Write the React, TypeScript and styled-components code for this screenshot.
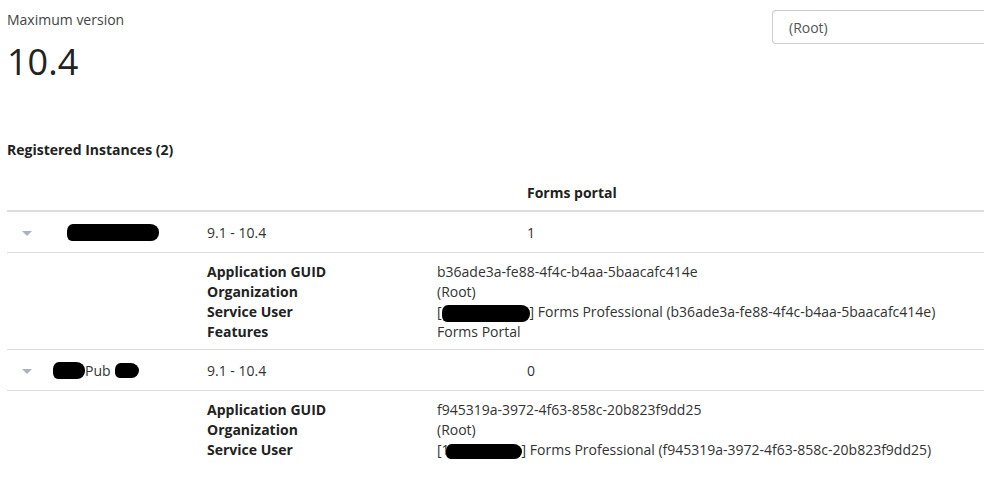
import React from "react";
import styled, { createGlobalStyle } from "styled-components";

const Global = createGlobalStyle`
  html, body { margin: 0; padding: 0; background: #fff; }
  body { font-family: "Open Sans", "Liberation Sans", sans-serif; font-size: 14px; color: #333; }
`;

const Page = styled.div`
  padding: 0 0 0 7px;
  width: 984px;
  box-sizing: border-box;
  overflow: hidden;
`;

const TopBar = styled.div`
  display: flex;
  justify-content: space-between;
  align-items: flex-start;
`;

const VersionBlock = styled.div`
  padding-top: 10px;
`;

const SmallLabel = styled.div`
  font-size: 14px;
  line-height: 20px;
  color: #444;
`;

const BigNumber = styled.div`
  font-size: 36px;
  line-height: 48px;
  margin-top: 8px;
  color: #222;
`;

const SelectBox = styled.div`
  margin-top: 10px;
  width: 212px;
  height: 34px;
  box-sizing: border-box;
  border: 1px solid #ccc;
  border-right: none;
  border-radius: 4px 0 0 4px;
  padding: 0 16px;
  display: flex;
  align-items: center;
  color: #555;
  font-size: 14px;
`;

const SectionTitle = styled.div`
  margin-top: 54px;
  font-weight: 700;
  font-size: 14px;
  line-height: 20px;
  color: #222;
`;

const Table = styled.div`
  margin-top: 14px;
  display: grid;
  grid-template-columns: 52px 140px 320px 1fr;
`;

const HeaderCell = styled.div<{ $col: number }>`
  grid-column: ${(p) => p.$col};
  height: 38px;
  box-sizing: border-box;
  border-bottom: 2px solid #ddd;
  padding: 0 8px;
  display: flex;
  align-items: center;
  font-weight: 700;
  color: #222;
`;

const Cell = styled.div`
  height: 41px;
  box-sizing: border-box;
  border-bottom: 1px solid #ddd;
  padding: 0 8px;
  display: flex;
  align-items: center;
  white-space: nowrap;
`;

const CaretCell = styled(Cell)`
  padding-left: 15px;
`;

const Caret = styled.span`
  width: 0;
  height: 0;
  border-left: 5px solid transparent;
  border-right: 5px solid transparent;
  border-top: 5px solid #aab1c0;
  margin-top: 3px;
`;

const DetailsRow = styled.div<{ $last?: boolean }>`
  grid-column: 1 / -1;
  border-bottom: ${(p) => (p.$last ? "none" : "1px solid #ddd")};
  display: grid;
  grid-template-columns: 192px 230px 1fr;
  padding: 9px 0 7px;
`;

const DetailsGrid = styled.div`
  grid-column: 2 / 4;
  display: grid;
  grid-template-columns: 230px 1fr;
  padding-left: 8px;
  line-height: 20px;
`;

const DetailLabel = styled.div`
  font-weight: 700;
  color: #222;
`;

const DetailValue = styled.div`
  white-space: nowrap;
`;

const Redact = styled.span<{ $w: number; $h: number }>`
  display: inline-block;
  vertical-align: middle;
  width: ${(p) => p.$w}px;
  height: ${(p) => p.$h}px;
  background: #000;
  border-radius: 6px 9px 8px 5px / 7px 8px 8px 6px;
`;

type Instance = {
  name: React.ReactNode;
  version: string;
  count: string;
  guid: string;
  user: React.ReactNode;
  features?: string;
};

const instances: Instance[] = [
  {
    name: <Redact $w={92} $h={17} />,
    version: "9.1 - 10.4",
    count: "1",
    guid: "b36ade3a-fe88-4f4c-b4aa-5baacafc414e",
    user: (
      <>
        [<Redact $w={88} $h={17} />] Forms Professional (b36ade3a-fe88-4f4c-b4aa-5baacafc414e)
      </>
    ),
    features: "Forms Portal",
  },
  {
    name: (
      <>
        <Redact $w={32} $h={17} style={{ marginLeft: -14 }} />
        Pub
        <Redact $w={24} $h={15} style={{ marginLeft: 4 }} />
      </>
    ),
    version: "9.1 - 10.4",
    count: "0",
    guid: "f945319a-3972-4f63-858c-20b823f9dd25",
    user: (
      <>
        [1<Redact $w={76} $h={15} style={{ marginLeft: -4 }} />] Forms Professional (f945319a-3972-4f63-858c-20b823f9dd25)
      </>
    ),
  },
];

export default function App() {
  return (
    <Page>
      <Global />
      <TopBar>
        <VersionBlock>
          <SmallLabel>Maximum version</SmallLabel>
          <BigNumber>10.4</BigNumber>
        </VersionBlock>
        <SelectBox>(Root)</SelectBox>
      </TopBar>
      <SectionTitle>Registered Instances (2)</SectionTitle>
      <Table>
        <HeaderCell $col={1} />
        <HeaderCell $col={2} />
        <HeaderCell $col={3} />
        <HeaderCell $col={4}>Forms portal</HeaderCell>
        {instances.map((inst, i) => (
          <React.Fragment key={i}>
            <CaretCell>
              <Caret />
            </CaretCell>
            <Cell>{inst.name}</Cell>
            <Cell>{inst.version}</Cell>
            <Cell>{inst.count}</Cell>
            <DetailsRow $last={i === instances.length - 1}>
              <DetailsGrid>
                <DetailLabel>Application GUID</DetailLabel>
                <DetailValue>{inst.guid}</DetailValue>
                <DetailLabel>Organization</DetailLabel>
                <DetailValue>(Root)</DetailValue>
                <DetailLabel>Service User</DetailLabel>
                <DetailValue>{inst.user}</DetailValue>
                {inst.features && (
                  <>
                    <DetailLabel>Features</DetailLabel>
                    <DetailValue>{inst.features}</DetailValue>
                  </>
                )}
              </DetailsGrid>
            </DetailsRow>
          </React.Fragment>
        ))}
      </Table>
    </Page>
  );
}
